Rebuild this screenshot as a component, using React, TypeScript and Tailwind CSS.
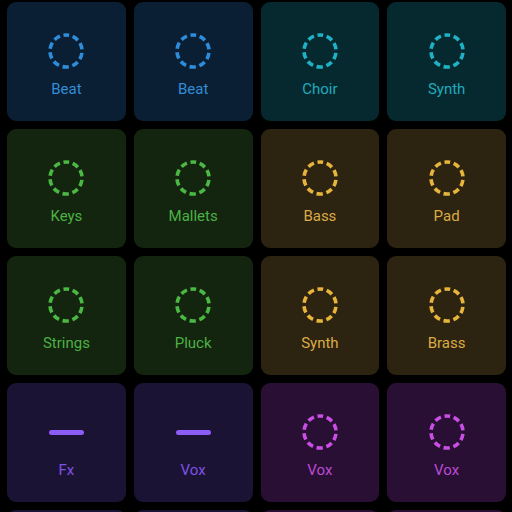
import React from "react";

type Tile = { label?: string; theme: keyof typeof themes; kind: "ring" | "bar" };

const themes = {
  blue: { bg: "bg-[#0a1f33]", stroke: "#2e8ddb", text: "text-[#338cd6]" },
  teal: { bg: "bg-[#06292f]", stroke: "#1fb1c5", text: "text-[#22a9bc]" },
  green: { bg: "bg-[#13250f]", stroke: "#4bb843", text: "text-[#4cb045]" },
  amber: { bg: "bg-[#2c2310]", stroke: "#e8b53c", text: "text-[#dbab45]" },
  indigo: { bg: "bg-[#1b1333]", stroke: "#8b5cf6", text: "text-[#7d52e4]" },
  magenta: { bg: "bg-[#290f33]", stroke: "#c94fe4", text: "text-[#bb4bd6]" },
};

const tiles: Tile[] = [
  { label: "Beat", theme: "blue", kind: "ring" },
  { label: "Beat", theme: "blue", kind: "ring" },
  { label: "Choir", theme: "teal", kind: "ring" },
  { label: "Synth", theme: "teal", kind: "ring" },
  { label: "Keys", theme: "green", kind: "ring" },
  { label: "Mallets", theme: "green", kind: "ring" },
  { label: "Bass", theme: "amber", kind: "ring" },
  { label: "Pad", theme: "amber", kind: "ring" },
  { label: "Strings", theme: "green", kind: "ring" },
  { label: "Pluck", theme: "green", kind: "ring" },
  { label: "Synth", theme: "amber", kind: "ring" },
  { label: "Brass", theme: "amber", kind: "ring" },
  { label: "Fx", theme: "indigo", kind: "bar" },
  { label: "Vox", theme: "indigo", kind: "bar" },
  { label: "Vox", theme: "magenta", kind: "ring" },
  { label: "Vox", theme: "magenta", kind: "ring" },
  { theme: "indigo", kind: "bar" },
  { theme: "indigo", kind: "bar" },
  { theme: "magenta", kind: "ring" },
  { theme: "magenta", kind: "ring" },
];

function Ring({ color }: { color: string }) {
  const r = 16;
  const c = 2 * Math.PI * r;
  const period = c / 10;
  return (
    <svg width="38" height="38" viewBox="0 0 38 38">
      <circle
        cx="19"
        cy="19"
        r={r}
        fill="none"
        stroke={color}
        strokeWidth="3.6"
        strokeDasharray={`${period * 0.64} ${period * 0.36}`}
        strokeDashoffset={period * 0.32}
        transform="rotate(-90 19 19)"
      />
    </svg>
  );
}

export default function App() {
  return (
    <div className="w-[512px] h-[512px] overflow-hidden bg-black">
      <div
        className="grid grid-cols-4 gap-[8px] pl-[7px] pr-[6px] pt-[2px]"
        style={{ fontFamily: "Roboto, 'Noto Sans', sans-serif" }}
      >
        {tiles.map((t, i) => {
          const th = themes[t.theme];
          return (
            <div
              key={i}
              className={`${th.bg} h-[119px] rounded-[9px] flex flex-col items-center pt-[30px]`}
            >
              <div className="h-[38px] flex items-center justify-center">
                {t.kind === "ring" ? (
                  <Ring color={th.stroke} />
                ) : (
                  <div
                    className="w-[35px] h-[5px] rounded-full"
                    style={{ backgroundColor: th.stroke }}
                  />
                )}
              </div>
              {t.label && (
                <div className={`${th.text} text-[15px] leading-[20px] mt-[9px]`}>{t.label}</div>
              )}
            </div>
          );
        })}
      </div>
    </div>
  );
}
